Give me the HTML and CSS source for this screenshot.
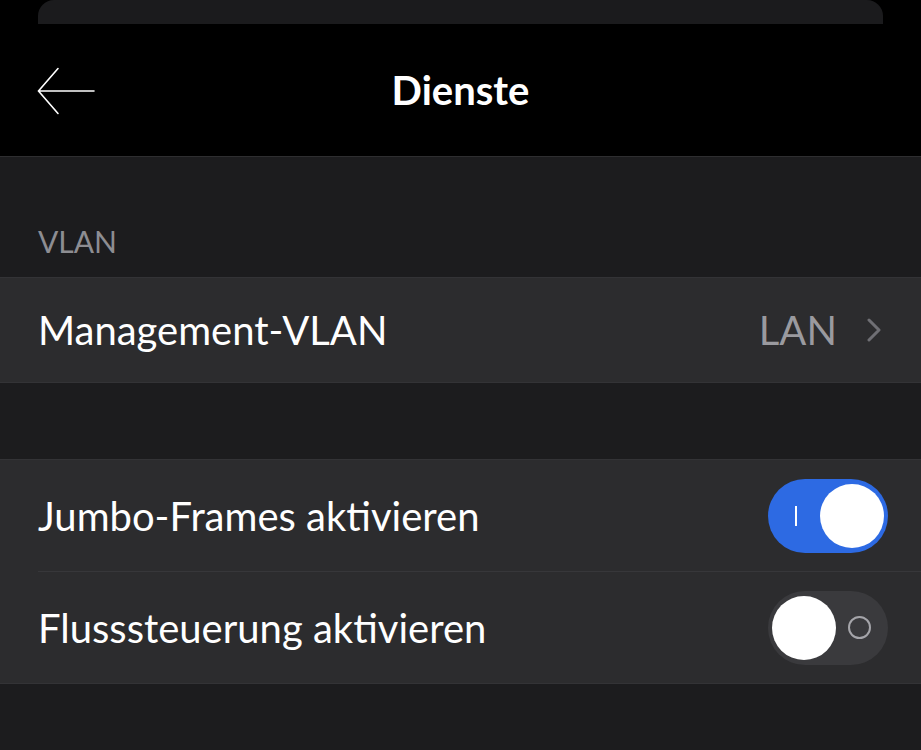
FILE: index.html
```html
<!DOCTYPE html>
<html lang="de">
<head>
<meta charset="UTF-8">
<meta name="viewport" content="width=device-width, initial-scale=1.0">
<title>Dienste</title>
<link rel="stylesheet" href="styles.css">
</head>
<body>
<div class="top">
    <div class="sheet-peek"></div>
    <div class="nav-bar">
        <button class="back" aria-label="Zurück">
            <svg width="58" height="48" viewBox="0 0 58 48">
                <path d="M21 1.5 L1.5 24 L21 46.5 M1.5 24 H57" fill="none" stroke="#fff" stroke-width="1.6" stroke-linecap="round" stroke-linejoin="miter"/>
            </svg>
        </button>
        <h1>Dienste</h1>
    </div>
</div>

<div class="settings">
    <div class="section-label">VLAN</div>
    <div class="group">
        <div class="row row-link">
            <span class="row-title">Management-VLAN</span>
            <span class="row-value">LAN</span>
            <svg class="chevron" width="14" height="24" viewBox="0 0 14 24">
                <path d="M2 2 L12 12 L2 22" fill="none" stroke="#6f6f74" stroke-width="3" stroke-linecap="round" stroke-linejoin="round"/>
            </svg>
        </div>
    </div>

    <div class="group group-spaced">
        <div class="row row-switch">
            <span class="row-title">Jumbo-Frames aktivieren</span>
            <span class="switch on"><span class="mark-on"></span><span class="knob"></span></span>
        </div>
        <div class="row row-switch">
            <span class="row-title">Flusssteuerung aktivieren</span>
            <span class="switch"><span class="knob"></span><span class="mark-off"></span></span>
        </div>
    </div>
</div>
</body>
</html>
```

FILE: styles.css
```css
body {
    margin: 0;
    height: 750px;
    font-family: Lato, "Open Sans", sans-serif;
    background-color: #1c1c1e;
    color: #fff;
    overflow: hidden;
}

.top {
    background-color: #000;
}

/* edge of the sheet underneath the modal */
.sheet-peek {
    height: 24px;
    margin: 0 38px;
    background-color: #1b1b1d;
    border-radius: 16px 16px 0 0;
}

.nav-bar {
    position: relative;
    height: 132px;
    display: flex;
    align-items: center;
    justify-content: center;
    border-bottom: 1px solid #2e2e30;
}

.nav-bar h1 {
    margin: 0;
    font-size: 40px;
    font-weight: 700;
}

.back {
    position: absolute;
    left: 37px;
    top: 43px;
    padding: 0;
    background: none;
    border: 0;
    display: flex;
}

.section-label {
    padding: 66px 38px 0;
    height: 54px;
    font-size: 30px;
    color: #8d8d92;
}

.group {
    background-color: #2c2c2e;
    border-top: 1px solid #333336;
    border-bottom: 1px solid #333336;
}

.group-spaced {
    margin-top: 76px;
}

.row {
    display: flex;
    align-items: center;
    padding: 0 33px 0 38px;
}

.row-link {
    height: 104px;
}

.row-switch {
    height: 111px;
}

.row-switch + .row-switch {
    border-top: 1px solid #37373a;
    margin-left: 38px;
    padding-left: 0;
}

.row-title {
    flex: 1;
    font-size: 40px;
}

.row-value {
    font-size: 40px;
    color: #9a9a9f;
    margin-right: 30px;
}

.chevron {
    margin-right: 7px;
}

.switch {
    display: flex;
    align-items: center;
    justify-content: space-between;
    width: 120px;
    height: 74px;
    padding: 0 4px;
    box-sizing: border-box;
    border-radius: 37px;
    background-color: #3a3a3d;
}

.switch.on {
    background-color: #2d6ae3;
    padding-left: 27px;
}

.knob {
    width: 64px;
    height: 64px;
    border-radius: 50%;
    background-color: #fff;
}

.mark-on {
    width: 2px;
    height: 20px;
    background-color: #fff;
}

.mark-off {
    width: 19px;
    height: 19px;
    margin-right: 13px;
    border: 2px solid #a5a5aa;
    border-radius: 50%;
}
```
